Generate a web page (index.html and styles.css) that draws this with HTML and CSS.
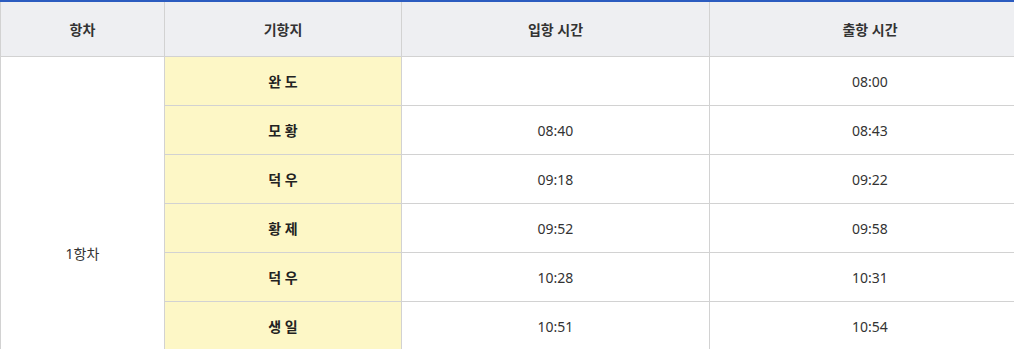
FILE: index.html
```html
<!DOCTYPE html>
<html lang="ko">
<head>
<meta charset="utf-8">
<link rel="stylesheet" href="styles.css">
</head>
<body>
<table class="schedule">
  <colgroup>
    <col class="c1"><col class="c2"><col class="c3"><col class="c4">
  </colgroup>
  <thead>
    <tr><th>항차</th><th>기항지</th><th>입항 시간</th><th>출항 시간</th></tr>
  </thead>
  <tbody>
    <tr><td class="trip" rowspan="8">1항차</td><td class="port">완 도</td><td></td><td>08:00</td></tr>
    <tr><td class="port">모 황</td><td>08:40</td><td>08:43</td></tr>
    <tr><td class="port">덕 우</td><td>09:18</td><td>09:22</td></tr>
    <tr><td class="port">황 제</td><td>09:52</td><td>09:58</td></tr>
    <tr><td class="port">덕 우</td><td>10:28</td><td>10:31</td></tr>
    <tr><td class="port">생 일</td><td>10:51</td><td>10:54</td></tr>
    <tr><td class="port">금 일</td><td>11:20</td><td>11:25</td></tr>
    <tr><td class="port">완 도</td><td>12:05</td><td></td></tr>
  </tbody>
</table>
</body>
</html>
```

FILE: styles.css
```css
html, body {
  margin: 0;
  padding: 0;
  background: #fff;
}
.schedule {
  width: 1030px;
  border-collapse: collapse;
  table-layout: fixed;
  border-top: 2px solid #2b5cc0;
  font-family: "Noto Sans", "Noto Sans CJK KR", sans-serif;
  font-size: 14px;
  color: #333;
}
.c1 { width: 164px; }
.c2 { width: 237px; }
.c3 { width: 308px; }
.c4 { width: 321px; }
.schedule th,
.schedule td {
  border: 1px solid #d2d2d2;
  text-align: center;
  vertical-align: middle;
  padding: 0;
}
.schedule th {
  background: #eeeff2;
  height: 54px;
  font-weight: 600;
  color: #333;
  border-top: none;
}
.schedule td {
  height: 48px;
}
.schedule .port {
  background: #fdf7c6;
  font-weight: 700;
  color: #222;
}
.schedule .trip {
  color: #333;
}
```
